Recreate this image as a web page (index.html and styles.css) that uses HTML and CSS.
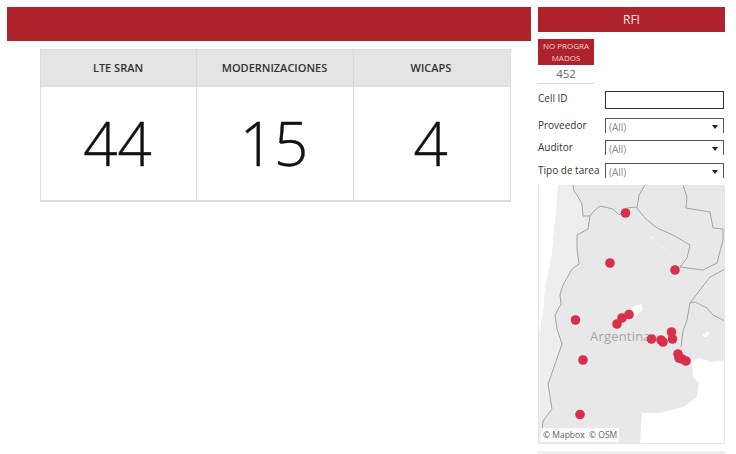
FILE: index.html
```html
<!DOCTYPE html>
<html lang="es">
<head>
<meta charset="utf-8">
<title>RFI</title>
<link rel="stylesheet" href="styles.css">
</head>
<body>
<main class="page">
  <section class="main-col">
    <div class="banner"></div>
    <div class="kpi-table">
      <div class="kpi-col">
        <div class="kpi-head">LTE SRAN</div>
        <div class="kpi-value">44</div>
      </div>
      <div class="kpi-col">
        <div class="kpi-head">MODERNIZACIONES</div>
        <div class="kpi-value">15</div>
      </div>
      <div class="kpi-col">
        <div class="kpi-head">WICAPS</div>
        <div class="kpi-value">4</div>
      </div>
    </div>
  </section>
  <aside class="side-col">
    <div class="side-title">RFI</div>
    <div class="mini-kpi">
      <div class="mini-head">NO PROGRA MADOS</div>
      <div class="mini-value">452</div>
    </div>
    <div class="filter filter-text">
      <span class="filter-label">Cell ID</span>
      <span class="text-box"></span>
    </div>
    <div class="filters">
      <div class="filter">
        <span class="filter-label">Proveedor</span>
        <span class="select">(All)<span class="caret"></span></span>
      </div>
      <div class="filter">
        <span class="filter-label">Auditor</span>
        <span class="select">(All)<span class="caret"></span></span>
      </div>
      <div class="filter">
        <span class="filter-label">Tipo de tarea</span>
        <span class="select">(All)<span class="caret"></span></span>
      </div>
    </div>
    <div class="map">
      <svg class="map-svg" viewBox="539 185 185 258" aria-hidden="true">
        <path class="land" d="M558 185L725 185L725 360L710 362L700 358L692 360L693 377L699 383L697 397L683 407L660 413L642 413L641 426L640 444L538 444L538 340L541 325L544 305L545 289L552 255L555 222L557 205Z"/>
        <path class="land-west" d="M558 185L573 185L577 195L582 204L583 216L588 229L577 235L577 249L579 264L572 269L563 285L560 295L561 304L555 315L557 329L562 344L555 364L548 384L552 409L543 421L542 444L538 444L538 340L541 325L544 305L545 289L552 255L555 222L557 205Z"/>
        <path class="lake" d="M631 309L641 304L642 310L635 316Z"/>
        <path class="lake" d="M650 236.500L653 238.500M662 246.500L665 249.500"/>
        <path class="lake" d="M703 335L708 332L709 334L705 337Z"/>
        <g class="borders">
          <path d="M573 185L574 191L577 195L582 204L583 216L590 216L595 210L600 206L613 209L619 215"/>
          <path d="M619 215L627 208L636 207L645 218L657 228L673 235L690 245L687 258L680 267L703 270L717 263L723 240L723 229L713 228L710 212L686 208L687 197L683 185"/>
          <path d="M645 185L639 195L637 208"/>
          <path d="M590 216L588 229L577 235L577 249L579 264L572 269L563 285L560 295L561 304L555 315L557 329L562 344L555 364L548 384L552 409L543 421L542 431"/>
          <path d="M725 269L710 277L690 303L687 320L683 331L681 347"/>
          <path d="M690 303L695 302L707 308L713 315L725 321"/>
        </g>
        <text class="map-label" x="590" y="341">Argentina</text>
        <g class="dots">
          <circle cx="625.500" cy="213" r="4.800"/><circle cx="610" cy="263" r="4.800"/><circle cx="675" cy="270" r="4.800"/>
          <circle cx="575.500" cy="320" r="4.800"/><circle cx="629" cy="314.500" r="4.800"/><circle cx="622" cy="318" r="4.800"/>
          <circle cx="617" cy="324" r="4.800"/><circle cx="651.500" cy="339" r="4.800"/><circle cx="661" cy="340" r="4.800"/>
          <circle cx="663" cy="342" r="4.800"/><circle cx="671.500" cy="332" r="4.800"/><circle cx="672.500" cy="339" r="4.800"/>
          <circle cx="678" cy="354" r="4.800"/><circle cx="679" cy="358" r="4.800"/><circle cx="682" cy="359" r="4.800"/>
          <circle cx="686" cy="361" r="4.800"/><circle cx="583" cy="360" r="4.800"/><circle cx="580" cy="414.500" r="4.800"/>
        </g>
      </svg>
      <div class="attribution">© Mapbox  © OSM</div>
    </div>
    <div class="bottom-strip"></div>
  </aside>
</main>
</body>
</html>
```
FILE: styles.css
```css
* { box-sizing: border-box; }
html, body { margin: 0; height: 100%; background: #fff; overflow: hidden; }
body { font-family: "Open Sans", "Liberation Sans", sans-serif; color: #333; }

.page { display: flex; align-items: flex-start; padding-top: 7px; padding-left: 7px; height: 454px; }

.main-col { width: 524px; flex: none; }
.banner { height: 34px; background: #ae232b; }

.kpi-table { display: grid; grid-template-columns: 156px 157px 156px; margin: 8px 0 0 33px; width: 470.500px; height: 153px; border: 1px solid #dcdcdc; border-width: 1px 1px 2px 1px; }
.kpi-col { display: flex; flex-direction: column; margin-left: -1px; border-left: 1px solid #d8d8d8; }
.kpi-col:first-child { margin-left: 0; border-left: 0; }
.kpi-head { height: 37px; padding-right: 2px; background: #e4e4e4; border-bottom: 2px solid #dedede; display: flex; align-items: center; justify-content: center; font-size: 11px; font-weight: 600; color: #333; }
.kpi-value { flex: 1; display: flex; align-items: center; justify-content: center; padding: 0 3px 1px 0; font-size: 60px; font-weight: 300; color: #111; -webkit-text-stroke: .4px #111; }

.side-col { width: 187px; margin-left: 7px; flex: none; display: flex; flex-direction: column; }
.side-title { height: 25px; background: #ae232b; color: #f3e3e3; font-size: 12px; font-weight: 500; display: flex; align-items: center; justify-content: center; }

.mini-kpi { width: 56px; margin-top: 7px; border-bottom: 1px solid #d8d8d8; height: 45px; }
.mini-head { height: 26px; background: #ae232b; color: #f0d8d8; font-size: 8px; line-height: 12px; text-align: center; padding-top: 1px; }
.mini-value { font-size: 11.500px; color: #666; text-align: center; line-height: 18px; }

.filter { display: flex; align-items: flex-start; justify-content: space-between; }
.filter-label { font-size: 10px; line-height: 14px; color: #333; white-space: nowrap; }
.filter-text { margin-top: 7px; padding-right: 1px; height: 19px; }
.text-box { width: 119px; height: 18px; border: 1px solid #333; background: #fff; }

.filters { margin-top: 8px; display: flex; flex-direction: column; gap: 2px; }
.filters .filter { height: 20px; }
.filters .filter:last-child { margin-top: 1px; }
.select { position: relative; display: block; width: 119px; height: 15px; margin-right: 1px; padding: 1px 3px 0; font-size: 10px; line-height: 14px; color: #8a8a8a; border: 1px solid #555; border-bottom: 0; background: #fff; }
.caret { position: absolute; right: 5px; top: 6px; border: 3px solid transparent; border-top: 4px solid #222; border-bottom: 0; }

.map { position: relative; margin-top: 2px; height: 259px; border: 1px solid #e4e4e4; border-top: 0; }
.map-svg { display: block; width: 185px; height: 258px; }
.land { fill: #e8e8e8; }
.land-west { fill: #eeeeee; }
.lake { fill: #fff; stroke: #fff; stroke-width: 1; }
.borders path { fill: none; stroke: #a3a3a3; stroke-width: 1; stroke-linejoin: round; }
.map-label { font-family: "Open Sans", sans-serif; font-size: 13px; fill: #a6a6a6; letter-spacing: .2px; }
.dots circle { fill: #d6304a; }
.attribution { position: absolute; left: 2px; bottom: 1px; padding: 0 2px; font-size: 8.500px; line-height: 14px; white-space: pre; color: #666; background: rgba(255,255,255,.8); }

.bottom-strip { margin-top: 7px; height: 7px; background: #eee; }
```
